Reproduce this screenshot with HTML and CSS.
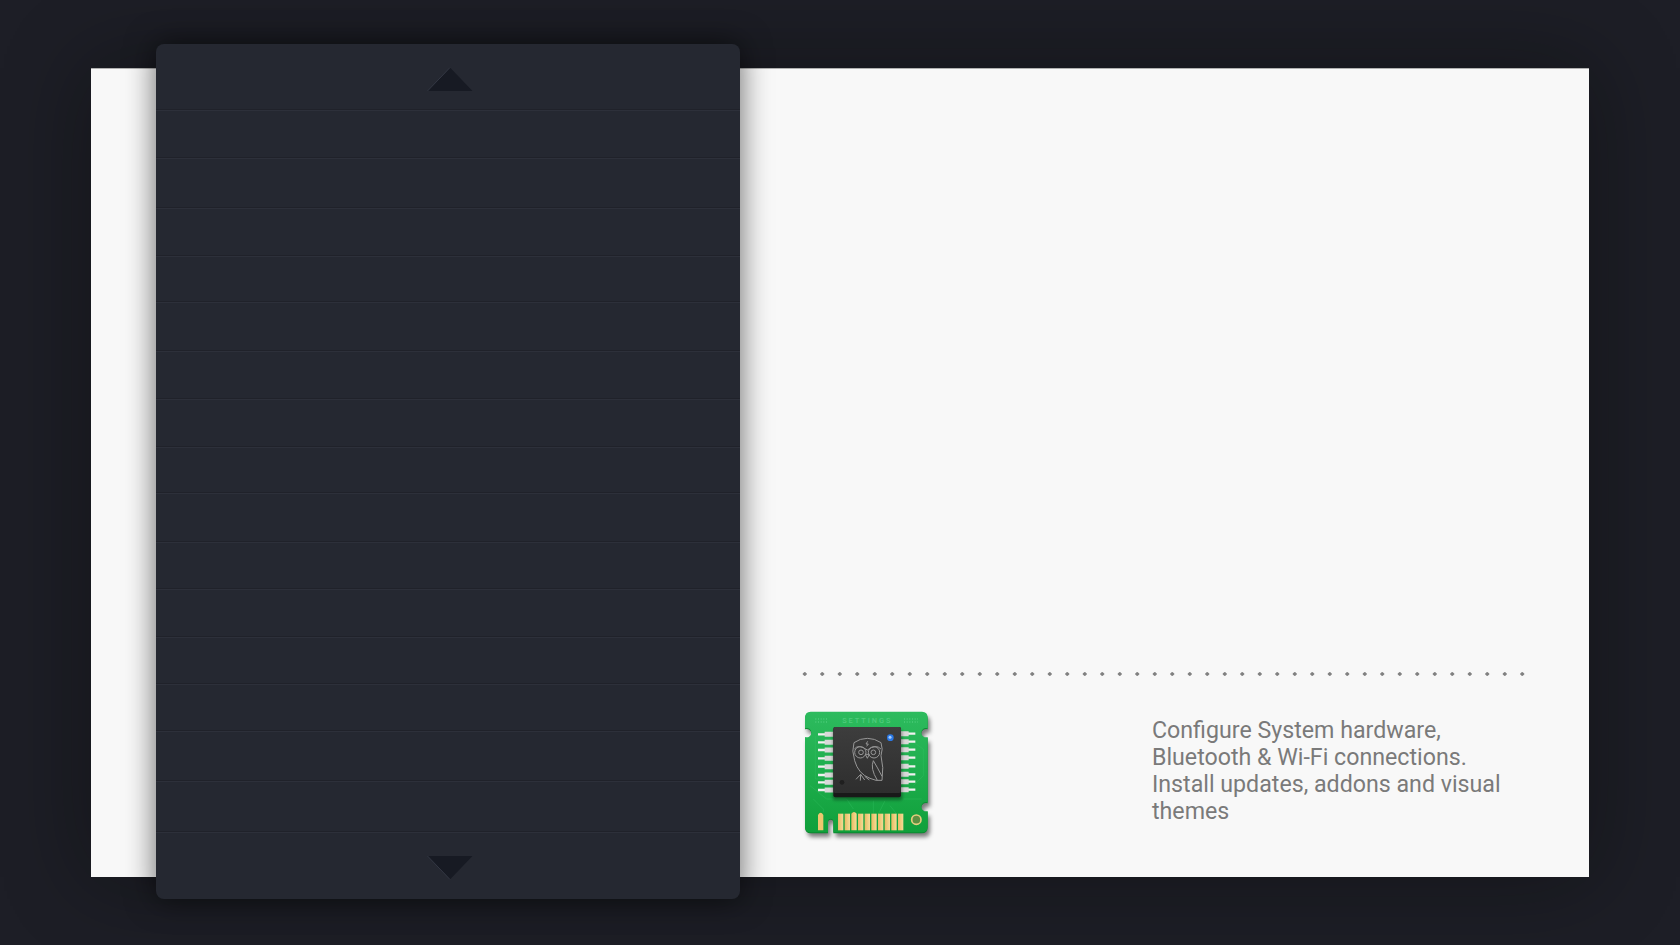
FILE: index.html

```html
<!DOCTYPE html>
<html lang="en">
<head>
    <meta charset="UTF-8">
    <meta name="viewport" content="width=device-width, initial-scale=1.0">
    <title>Settings</title>
    <link rel="stylesheet" href="styles.css">
</head>
<body>
    <div class="card">
        <!-- menu panel hangs over the card -->
        <div class="panel">
            <div class="panel-top">
                <svg class="arrow" width="46" height="28" viewBox="0 0 46 28"><path d="M0.5 25 L23 1.5 L45.5 25 Z" fill="#171a23"/><path d="M0.5 25 L23 1.5" stroke="#343844" fill="none"/></svg>
            </div>
            <div class="row"></div>
            <div class="row r50"></div>
            <div class="row"></div>
            <div class="row r46"></div>
            <div class="row r49"></div>
            <div class="row"></div>
            <div class="row"></div>
            <div class="row r46"></div>
            <div class="row r49"></div>
            <div class="row r47"></div>
            <div class="row"></div>
            <div class="row r47"></div>
            <div class="row r47"></div>
            <div class="row r50"></div>
            <div class="row r51"></div>
            <div class="panel-bottom">
                <svg class="arrow" width="46" height="28" viewBox="0 0 46 28"><path d="M0.5 2 L23 25.5 L45.5 2 Z" fill="#171a23"/><path d="M0.5 2 L23 25.5" stroke="#343844" fill="none"/></svg>
            </div>
        </div>

        <div class="info">
            <div class="dots"></div>
            <div class="info-row">
                <svg class="chip" width="160" height="150" viewBox="0 0 480 450">
                    <defs>
                        <linearGradient id="board" x1="0" y1="0" x2="0" y2="1">
                            <stop offset="0" stop-color="#2dbb5e"/>
                            <stop offset="1" stop-color="#10a03b"/>
                        </linearGradient>
                        <linearGradient id="die" x1="0" y1="0" x2="0" y2="1">
                            <stop offset="0" stop-color="#3d3d3d"/>
                            <stop offset="1" stop-color="#2e2e2e"/>
                        </linearGradient>
                        <linearGradient id="blade" x1="0" y1="0" x2="1" y2="0">
                            <stop offset="0" stop-color="#e9bb63"/>
                            <stop offset="1" stop-color="#f5dc96"/>
                        </linearGradient>
                        <filter id="soft" x="-20%" y="-20%" width="140%" height="140%"><feGaussianBlur stdDeviation="7"/></filter>
                        <filter id="soft2" x="-20%" y="-20%" width="140%" height="140%"><feGaussianBlur stdDeviation="4"/></filter>
                        <path id="pcb" d="M62 38 H396 Q413 38 413 56 V88 A14 14 0 1 0 413 114 V310 A14 14 0 1 0 413 336 V382 Q413 400 395 400 H130 V368 Q130 359 122 359 Q114 359 114 368 V400 H62 Q45 400 45 382 V114 A14 14 0 1 0 45 88 V56 Q45 38 62 38 Z"/>
                    </defs>
                    <use href="#pcb" class="chip-shadow" transform="translate(7 14)" filter="url(#soft)"/>
                    <use href="#pcb" fill="#0b8a30" transform="translate(0 3)"/>
                    <use href="#pcb" fill="url(#board)"/>
                    <path class="trace" d="M60 260 L110 300 H170 L190 330 M70 300 L100 330 V340 M76 110 V240 H120 M370 130 L400 150 V230 L370 260 M300 320 L320 345 M250 305 V345 M285 305 L265 345 M340 300 H395"/>
                    <!-- silk screen -->
                    <text class="silk" x="232" y="71" text-anchor="middle">SETTINGS</text>
                    <path class="silk-dots" d="M76 60 H116 M76 69 H116 M342 60 H384 M342 69 H384"/>
                    <!-- pins -->
                    <path class="pin-tip" d="M84 106 H106 M84 130 H106 M84 153 H106 M84 178 H106 M84 203 H106 M84 228 H106 M84 250 H106 M84 273 H106 M354 104 H376 M354 128 H376 M354 152 H376 M354 176 H376 M354 202 H376 M354 226 H376 M354 248 H376 M354 272 H376"/>
                    <path class="pin-base" d="M104 106 H132 M104 130 H132 M104 153 H132 M104 178 H132 M104 203 H132 M104 228 H132 M104 250 H132 M104 273 H132 M331 104 H356 M331 128 H356 M331 152 H356 M331 176 H356 M331 202 H356 M331 226 H356 M331 248 H356 M331 272 H356"/>
                    <!-- die -->
                    <rect x="128" y="92" width="209" height="212" rx="8" class="die-shadow" filter="url(#soft2)"/>
                    <rect x="130" y="84" width="203" height="211" rx="6" fill="#191919"/>
                    <rect x="130" y="84" width="203" height="198" rx="6" fill="url(#die)"/>
                    <circle cx="301" cy="116" r="10" fill="#2a78e6"/>
                    <circle cx="300" cy="115" r="4.5" fill="#a6ceff"/>
                    <circle cx="156" cy="250" r="7" fill="#1f1f1f"/>
                    <!-- owl -->
                    <g class="owl">
                        <path d="M192 131 Q210 118 232 118 Q254 118 273 131 Q280 150 273 170 Q282 205 276 244 H258 L240 238 Q205 225 194 185 Q184 155 192 131 Z"/>
                        <path d="M193 150 Q205 134 232 153 Q258 134 273 150"/>
                        <circle cx="211" cy="160" r="17"/>
                        <circle cx="252" cy="160" r="17"/>
                        <circle cx="213" cy="160" r="7"/>
                        <circle cx="250" cy="160" r="7"/>
                        <path d="M232 178 L226 166 H238 Z M233 127 L228 135 H235 L230 142"/>
                        <path d="M250 185 Q240 208 262 244 M250 185 Q262 205 276 232"/>
                        <path d="M198 241 L212 226 L224 243 M212 226 L211 245 M224 232 L238 243"/>
                    </g>
                    <!-- gold contacts -->
                    <path d="M84 394 V348 Q92 334 100 348 V394 Z" fill="#eec76f"/>
                    <g fill="url(#blade)">
                        <rect x="144" y="344" width="16" height="50"/>
                        <rect x="164" y="344" width="16" height="50"/>
                        <path d="M184 344 Q192 334 200 344 V394 H184 Z"/>
                        <rect x="204" y="344" width="16" height="50"/>
                        <rect x="224" y="344" width="16" height="50"/>
                        <rect x="244" y="344" width="16" height="50"/>
                        <rect x="264" y="344" width="16" height="50"/>
                        <rect x="284" y="344" width="16" height="50"/>
                        <rect x="304" y="344" width="16" height="50"/>
                        <rect x="324" y="344" width="16" height="50"/>
                    </g>
                    <circle cx="379" cy="362" r="14" fill="#5d8f42" stroke="#e6cd7e" stroke-width="5"/>
                </svg>
                <p class="desc">Configure System hardware, Bluetooth &amp; Wi-Fi connections. Install updates, addons and visual themes</p>
            </div>
        </div>
    </div>
</body>
</html>
```

FILE: styles.css

```css
html, body {
    margin: 0;
    height: 100%;
}
body {
    background-color: #1d1e26;
    padding: 68px 91px;
    box-sizing: border-box;
    height: 945px;
    overflow: hidden;
    font-family: Roboto, "Liberation Sans", sans-serif;
}

.card {
    position: relative;
    height: 809px;
    box-sizing: border-box;
    padding-left: 699px;
    background-color: #f8f8f8;
    border-top: 1px solid #b0b0b0;
    box-shadow: 0 0 80px rgba(8,10,8,0.42);
    display: flex;
    flex-direction: column;
    justify-content: flex-end;
}

.panel {
    position: absolute;
    top: -25px;
    left: 65px;
    width: 584px;
    height: 855px;
    background-color: #252831;
    border-radius: 8px;
    box-shadow: 0 0 30px rgba(0,0,0,0.6);
    display: flex;
    flex-direction: column;
}
.panel-top {
    height: 65px;
    display: flex;
    justify-content: center;
    padding: 22px 0 0 3px;
    box-sizing: border-box;
}
.panel-bottom {
    flex: 1;
    display: flex;
    justify-content: center;
    padding: 22px 0 0 3px;
    box-sizing: border-box;
    border-top: 1px solid #20222a;
    box-shadow: inset 0 1px 0 #2d303a;
}
.row {
    height: 48px;
    box-sizing: border-box;
    border-top: 1px solid #20222a;
    box-shadow: inset 0 1px 0 #2d303a;
}
.r46 { height: 46px; }
.r47 { height: 47px; }
.r49 { height: 49px; }
.r50 { height: 50px; }
.r51 { height: 51px; }

.info {
    padding-bottom: 28px;
}
.dots {
    margin-left: 6px;
    width: 735px;
    height: 4px;
    background-image: radial-gradient(circle, #808080 1.5px, transparent 2px);
    background-size: 17.5px 4px;
    background-repeat: repeat-x;
    margin-bottom: 23px;
}
.info-row {
    display: flex;
    align-items: flex-start;
}
.chip {
    flex: none;
}
.chip-shadow {
    fill: rgba(0,0,0,0.5);
}
.die-shadow {
    fill: rgba(0,0,0,0.35);
}
.trace {
    fill: none;
    stroke: #35c466;
    stroke-width: 2;
    opacity: 0.5;
}
.silk {
    font-family: Roboto, sans-serif;
    font-size: 22px;
    font-weight: 500;
    letter-spacing: 6px;
    fill: #4fcb7c;
}
.silk-dots {
    fill: none;
    stroke: #5ad488;
    stroke-width: 3;
    stroke-dasharray: 3 5;
}
.pin-tip {
    fill: none;
    stroke: #f1f1f1;
    stroke-width: 7;
}
.pin-base {
    fill: none;
    stroke: #d9d9d9;
    stroke-width: 15;
}
.owl * {
    fill: none;
    stroke: #979797;
    stroke-width: 3;
}
.desc {
    margin: 18px 0 0 202px;
    width: 360px;
    font-size: 23.2px;
    line-height: 27px;
    color: #7a7a7a;
}
```
